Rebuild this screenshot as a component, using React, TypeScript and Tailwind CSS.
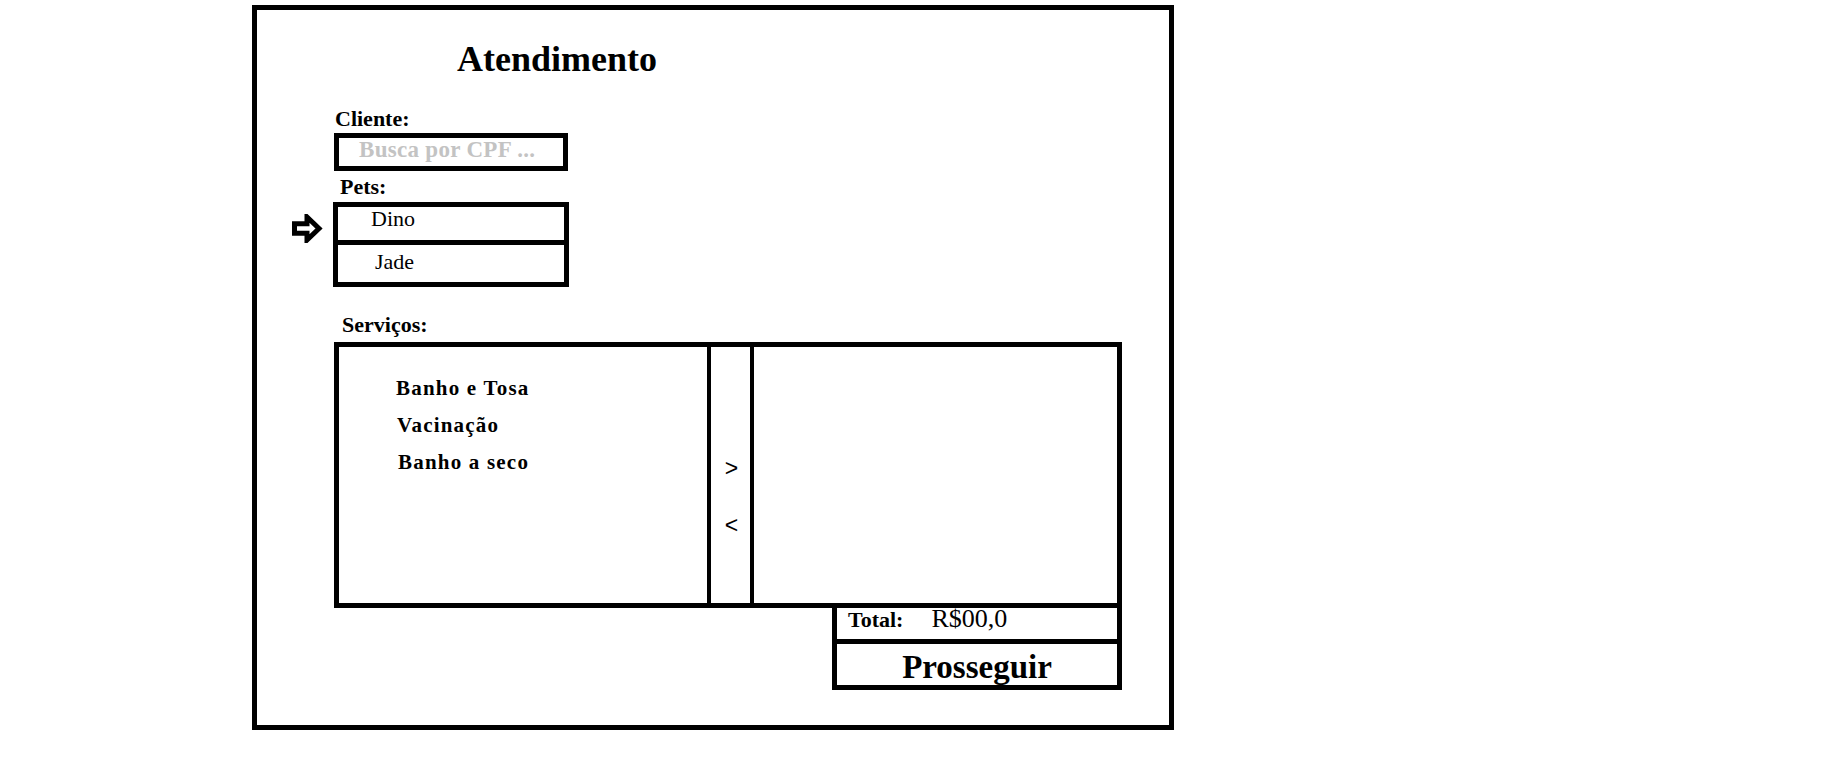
import React from 'react';

const services = [
  { name: 'Banho e Tosa', className: 'ml-[57px]' },
  { name: 'Vacinação', className: 'ml-[58px]' },
  { name: 'Banho a seco', className: 'ml-[59px]' },
];

function SelectArrow() {
  return (
    <svg width="31" height="29" viewBox="0 0 31 29" className="mt-[12px] mr-[10px] shrink-0">
      <polygon
        points="2.5,9.75 15,9.75 15,3 27,14.5 15,26 15,19.25 2.5,19.25"
        fill="white"
        stroke="black"
        strokeWidth="5"
        strokeLinejoin="miter"
      />
    </svg>
  );
}

export default function App() {
  return (
    <div className="min-h-screen bg-white pl-[252px] pt-[5px] font-['Liberation_Serif',serif] text-black">
      <div className="w-[922px] h-[725px] border-[5px] border-black flex flex-col">
        <h1 className="mt-[31px] ml-[200px] h-[36px] text-[36px] leading-[36px] font-bold">Atendimento</h1>

        <div className="ml-[77px] flex flex-col items-start">
          <label className="mt-[31px] ml-[1px] text-[22px] leading-[22px] font-bold">Cliente:</label>
          <div className="mt-[3px] w-[234px] h-[38px] border-[5px] border-black pl-[20px] text-[23px] leading-[24px] font-bold tracking-[0.3px] text-[#c3c3c3]">
            Busca por CPF ...
          </div>

          <label className="mt-[5px] ml-[6px] text-[22px] leading-[22px] font-bold">Pets:</label>
          <div className="mt-[4px] -ml-[42px] flex items-start">
            <SelectArrow />
            <div className="w-[236px] border-[5px] border-black text-[22px] leading-[22px]">
              <div className="h-[38px] pl-[33px] pt-[1px] border-b-[5px] border-black">Dino</div>
              <div className="h-[37px] pl-[37px] pt-[6px]">Jade</div>
            </div>
          </div>

          <label className="mt-[27px] ml-[8px] text-[22px] leading-[22px] font-bold">Serviços:</label>
          <div className="mt-[6px] w-[788px] flex flex-col items-end">
            <div className="w-full h-[266px] border-[5px] border-black flex">
              <ul className="w-[372px] border-r-[4px] border-black pt-[31px] flex flex-col gap-[16px]">
                {services.map((s) => (
                  <li key={s.name} className={`${s.className} text-[21px] leading-[21px] font-bold tracking-[1.2px]`}>
                    {s.name}
                  </li>
                ))}
              </ul>
              <div className="w-[39px] pt-[110px] pl-[2px] flex flex-col items-center gap-[34px] font-['Liberation_Sans',sans-serif] text-[23px] leading-[23px]">
                <button>&gt;</button>
                <button>&lt;</button>
              </div>
              <div className="flex-1 border-l-[4px] border-black" />
            </div>

            <div className="w-[290px] border-x-[5px] border-b-[5px] border-black">
              <div className="h-[36px] border-b-[5px] border-black flex items-start pl-[11px]">
                <span className="pt-[1px] text-[22px] leading-[22px] font-bold">Total:</span>
                <span className="ml-[28px] text-[26px] leading-[22px]">R$00,0</span>
              </div>
              <button className="w-full h-[41px] pt-[5px] text-[33px] leading-[33px] font-bold">Prosseguir</button>
            </div>
          </div>
        </div>
      </div>
    </div>
  );
}
